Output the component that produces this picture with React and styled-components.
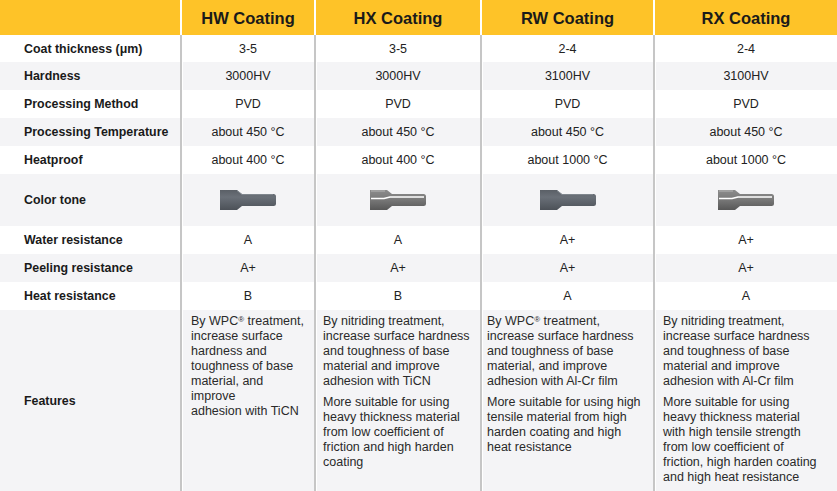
import React from 'react';
import styled, { createGlobalStyle } from 'styled-components';

const GlobalStyle = createGlobalStyle`
  html, body {
    margin: 0;
    padding: 0;
    background: #ffffff;
  }
  body {
    font-family: "Liberation Sans", Arial, Helvetica, sans-serif;
    color: #222222;
  }
`;

const COLUMNS = '180px 134px 166px 173px 184px';

const Table = styled.div`
  width: 837px;
  height: 491px;
  overflow: hidden;
  display: flex;
  flex-direction: column;
`;

const HeaderRow = styled.div`
  display: grid;
  grid-template-columns: ${COLUMNS};
  height: 35px;
  background: #fec328;
`;

const HeaderCell = styled.div`
  display: flex;
  align-items: center;
  justify-content: center;
  font-size: 16.5px;
  font-weight: bold;
  color: #1a1a1a;
  border-left: ${props => (props.first ? 'none' : '2px solid #ffffff')};
  padding-top: 1px;
`;

const Row = styled.div`
  display: grid;
  grid-template-columns: ${COLUMNS};
  height: ${props => props.height}px;
  background: ${props => (props.striped ? '#f4f4f6' : '#ffffff')};
  flex-shrink: 0;
`;

const Label = styled.div`
  display: flex;
  align-items: center;
  padding-left: 24px;
  font-size: 12.4px;
  font-weight: bold;
  color: #1a1a1a;
  white-space: nowrap;
`;

const Value = styled.div`
  display: flex;
  align-items: center;
  justify-content: center;
  font-size: 12.5px;
  color: #222222;
  border-left: 2px solid #c6c6c6;
  box-shadow: inset 1px 0 0 #ffffff;
  white-space: nowrap;
`;

const FeatureCell = styled.div`
  border-left: 2px solid #c6c6c6;
  box-shadow: inset 1px 0 0 #ffffff;
  padding: 4px 4px 0 ${props => props.indent}px;
  font-size: 12.5px;
  line-height: 15px;
  color: #2a2a2a;
  white-space: nowrap;
`;

const Para = styled.p`
  margin: 0;
  & + & {
    margin-top: 6px;
  }
`;

const Reg = styled.sup`
  font-size: 8px;
  vertical-align: top;
  position: relative;
  top: -2px;
`;

function Pin({ silver, id }) {
  return (
    <svg width="56" height="20" viewBox="0 0 56 20">
      <defs>
        <linearGradient id={`g-${id}`} x1="0" y1="0" x2="0" y2="1">
          {silver ? (
            <>
              <stop offset="0" stopColor="#8c8c8c" />
              <stop offset="0.45" stopColor="#7a7a7a" />
              <stop offset="1" stopColor="#575757" />
            </>
          ) : (
            <>
              <stop offset="0" stopColor="#5a5f66" />
              <stop offset="0.35" stopColor="#6a7078" />
              <stop offset="1" stopColor="#4c5158" />
            </>
          )}
        </linearGradient>
      </defs>
      <path
        d="M0 0 H17 L22 4 H53.5 Q56 4 56 6.5 V13.5 Q56 16 53.5 16 H22 L17 20 H0 Z"
        fill={`url(#g-${id})`}
      />
      {silver ? (
        <>
          <path d="M1 8.5 H14 L20 7 H54" stroke="#ffffff" strokeWidth="1.6" fill="none" />
          <path d="M1 1 H15" stroke="#b5b5b5" strokeWidth="1" fill="none" />
        </>
      ) : (
        <path d="M17 0.6 L22 4.6 H53" stroke="#8a9098" strokeWidth="0.8" fill="none" />
      )}
    </svg>
  );
}

const rows = [
  { label: 'Coat thickness (μm)', values: ['3-5', '3-5', '2-4', '2-4'], height: 27 },
  { label: 'Hardness', values: ['3000HV', '3000HV', '3100HV', '3100HV'], height: 28 },
  { label: 'Processing Method', values: ['PVD', 'PVD', 'PVD', 'PVD'], height: 28 },
  { label: 'Processing Temperature', values: ['about 450 °C', 'about 450 °C', 'about 450 °C', 'about 450 °C'], height: 28 },
  { label: 'Heatproof', values: ['about 400 °C', 'about 400 °C', 'about 1000 °C', 'about 1000 °C'], height: 28 },
  { label: 'Color tone', pins: [false, true, false, true], height: 52 },
  { label: 'Water resistance', values: ['A', 'A', 'A+', 'A+'], height: 28 },
  { label: 'Peeling resistance', values: ['A+', 'A+', 'A+', 'A+'], height: 28 },
  { label: 'Heat resistance', values: ['B', 'B', 'A', 'A'], height: 28 },
];

const WPC = (
  <>
    By WPC<Reg>®</Reg> treatment,
  </>
);

const features = [
  {
    indent: 9,
    paras: [[WPC, 'increase surface', 'hardness and', 'toughness of base', 'material, and', 'improve', 'adhesion with TiCN']],
  },
  {
    indent: 7,
    paras: [
      ['By nitriding treatment,', 'increase surface hardness', 'and toughness of base', 'material and improve', 'adhesion with TiCN'],
      ['More suitable for using', 'heavy thickness material', 'from low coefficient of', 'friction and high harden', 'coating'],
    ],
  },
  {
    indent: 5,
    paras: [
      [WPC, 'increase surface hardness', 'and toughness of base', 'material, and improve', 'adhesion with Al-Cr film'],
      ['More suitable for using high', 'tensile material from high', 'harden coating and high', 'heat resistance'],
    ],
  },
  {
    indent: 8,
    paras: [
      ['By nitriding treatment,', 'increase surface hardness', 'and toughness of base', 'material and improve', 'adhesion with Al-Cr film'],
      ['More suitable for using', 'heavy thickness material', 'with high tensile strength', 'from low coefficient of', 'friction, high harden coating', 'and high heat resistance'],
    ],
  },
];

const coatings = ['HW Coating', 'HX Coating', 'RW Coating', 'RX Coating'];

export default function App() {
  return (
    <>
      <GlobalStyle />
      <Table>
        <HeaderRow>
          <HeaderCell first />
          {coatings.map(name => (
            <HeaderCell key={name}>{name}</HeaderCell>
          ))}
        </HeaderRow>

        {rows.map((row, i) => (
          <Row key={row.label} height={row.height} striped={i % 2 === 1}>
            <Label>{row.label}</Label>
            {row.pins
              ? row.pins.map((silver, j) => (
                  <Value key={j}>
                    <Pin silver={silver} id={j} />
                  </Value>
                ))
              : row.values.map((v, j) => <Value key={j}>{v}</Value>)}
          </Row>
        ))}

        {/* Features */}
        <Row height={181} striped>
          <Label>Features</Label>
          {features.map((f, j) => (
            <FeatureCell key={j} indent={f.indent}>
              {f.paras.map((lines, k) => (
                <Para key={k}>
                  {lines.map((line, n) => (
                    <React.Fragment key={n}>
                      {line}
                      {n < lines.length - 1 && <br />}
                    </React.Fragment>
                  ))}
                </Para>
              ))}
            </FeatureCell>
          ))}
        </Row>
      </Table>
    </>
  );
}
